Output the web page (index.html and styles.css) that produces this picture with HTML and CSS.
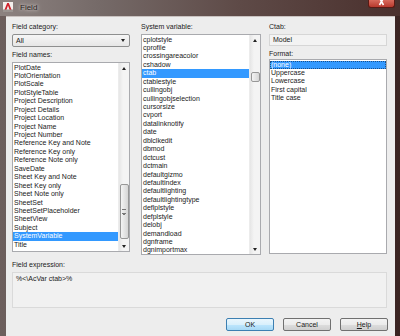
FILE: index.html
```html
<!DOCTYPE html>
<html lang="en">
<head>
  <meta charset="UTF-8">
  <title>Field</title>
  <link rel="stylesheet" href="styles.css">
</head>
<body>
  <div class="window">
    <div class="titlebar">
      <svg class="app-icon" width="10" height="10" viewBox="0 0 10 10">
        <rect x="0" y="0" width="10" height="10" fill="#f4f0ee"/>
        <polygon points="1,9 4.2,1 5.8,1 9,9 7,9 5,3.5 3,9" fill="#d0202a"/>
        <rect x="0" y="7.5" width="10" height="2.5" fill="#9a9390"/>
      </svg>
      <span class="title">Field</span>
      <div class="close">
        <svg width="25" height="7" viewBox="0 0 25 7">
          <path d="M10.5 -2 L14.5 5 M14.5 -2 L10.5 5" stroke="#fff" stroke-width="1.6"/>
        </svg>
      </div>
    </div>

    <div class="client">
      <div class="columns">
        <div class="col col-names">
          <div class="label">Field category:</div>
          <div class="combo">
            <span>All</span>
            <span class="arrow-down"></span>
          </div>
          <div class="label label-gap">Field names:</div>
          <div class="list names">
            <ul class="items">
              <li>PlotDate</li>
              <li>PlotOrientation</li>
              <li>PlotScale</li>
              <li>PlotStyleTable</li>
              <li>Project Description</li>
              <li>Project Details</li>
              <li>Project Location</li>
              <li>Project Name</li>
              <li>Project Number</li>
              <li>Reference Key and Note</li>
              <li>Reference Key only</li>
              <li>Reference Note only</li>
              <li>SaveDate</li>
              <li>Sheet Key and Note</li>
              <li>Sheet Key only</li>
              <li>Sheet Note only</li>
              <li>SheetSet</li>
              <li>SheetSetPlaceholder</li>
              <li>SheetView</li>
              <li>Subject</li>
              <li class="selected">SystemVariable</li>
              <li>Title</li>
            </ul>
            <div class="scrollbar">
              <div class="sb-btn"><span class="arrow-up"></span></div>
              <div class="track">
                <div class="thumb thumb-names"><span class="grip"></span></div>
              </div>
              <div class="sb-btn"><span class="arrow-down"></span></div>
            </div>
          </div>
        </div>

        <div class="col col-vars">
          <div class="label">System variable:</div>
          <div class="list vars">
            <ul class="items">
              <li>cplotstyle</li>
              <li>cprofile</li>
              <li>crossingareacolor</li>
              <li>cshadow</li>
              <li class="selected">ctab</li>
              <li>ctablestyle</li>
              <li>cullingobj</li>
              <li>cullingobjselection</li>
              <li>cursorsize</li>
              <li>cvport</li>
              <li>datalinknotify</li>
              <li>date</li>
              <li>dblclkedit</li>
              <li>dbmod</li>
              <li>dctcust</li>
              <li>dctmain</li>
              <li>defaultgizmo</li>
              <li>defaultindex</li>
              <li>defaultlighting</li>
              <li>defaultlightingtype</li>
              <li>deflplstyle</li>
              <li>defplstyle</li>
              <li>delobj</li>
              <li>demandload</li>
              <li>dgnframe</li>
              <li>dgnimportmax</li>
            </ul>
            <div class="scrollbar">
              <div class="sb-btn"><span class="arrow-up"></span></div>
              <div class="track">
                <div class="thumb thumb-vars"></div>
              </div>
              <div class="sb-btn"><span class="arrow-down"></span></div>
            </div>
          </div>
        </div>

        <div class="col col-format">
          <div class="label">Ctab:</div>
          <div class="readonly">Model</div>
          <div class="label label-gap2">Format:</div>
          <div class="list format">
            <ul class="items">
              <li class="selected focus">(none)</li>
              <li>Uppercase</li>
              <li>Lowercase</li>
              <li>First capital</li>
              <li>Title case</li>
            </ul>
          </div>
        </div>
      </div>

      <div class="label expr-label">Field expression:</div>
      <div class="expr">%&lt;\AcVar ctab&gt;%</div>

      <div class="buttons">
        <button class="btn btn-default">OK</button>
        <button class="btn">Cancel</button>
        <button class="btn"><u>H</u>elp</button>
      </div>
    </div>
  </div>
</body>
</html>
```

FILE: styles.css
```css
body {
  margin: 0;
  padding: 0;
  background: #3e2826;
  font-family: "Liberation Sans", Arial, sans-serif;
  font-size: 7px;
  color: #1a1a1a;
  overflow: hidden;
}
.window {
  width: 400px;
  height: 336px;
  display: flex;
  flex-direction: column;
  background: linear-gradient(90deg, #6d5f5d 0%, #5e4e4b 40%, #4a3230 80%, #3a2422 100%);
}
.titlebar {
  height: 16px;
  display: flex;
  align-items: flex-start;
  background: linear-gradient(90deg, #8c8280 0%, #756a68 25%, #5e4a47 60%, #4a302d 100%);
}
.app-icon {
  margin: 2px 0 0 3px;
}
.title {
  margin: 3px 0 0 7px;
  font-size: 8px;
  line-height: 9px;
  color: #2a2422;
  text-shadow: 0 0 3px #d8d2d0, 0 0 5px #cfc8c6;
}
.close {
  margin-left: auto;
  margin-right: 5px;
  width: 25px;
  height: 7px;
  border-radius: 0 0 3px 3px;
  background: linear-gradient(#d86a5c, #b8392d);
  border: 1px solid #5a1a14;
  border-top: none;
  overflow: hidden;
}
.close svg {
  display: block;
}
.client {
  flex: 1;
  margin: 0 5px 0 6px;
  padding: 5px 8px 0 6px;
  background: #ededed;
  border-top: 1px solid #c9c2c0;
}
.columns {
  display: flex;
  align-items: flex-start;
}
.col {
  display: flex;
  flex-direction: column;
}
.col-names {
  width: 118px;
}
.col-vars {
  width: 120px;
  margin-left: 11px;
}
.col-format {
  width: 118px;
  margin-left: 8px;
}
.label {
  height: 9px;
  line-height: 9px;
  white-space: nowrap;
}
.label-gap {
  margin-top: 3px;
}
.label-gap2 {
  margin-top: 3px;
}
.combo {
  margin-top: 3px;
  height: 11px;
  border: 1px solid #8e8f8f;
  border-radius: 2px;
  background: linear-gradient(#f6f6f6, #e6e6e6);
  display: flex;
  align-items: center;
  justify-content: space-between;
  padding: 0 4px 0 3px;
  line-height: 11px;
}
.readonly {
  margin-top: 3px;
  height: 10px;
  border: 1px solid #d6d6d6;
  background: #f3f3f3;
  padding-left: 3px;
  line-height: 10px;
}
.list {
  display: flex;
  background: #fff;
  border: 1px solid #a9aaae;
  overflow: hidden;
}
.names {
  margin-top: 3px;
  height: 188px;
}
.vars {
  margin-top: 3px;
  height: 219px;
}
.format {
  margin-top: 1px;
  height: 193px;
}
.items {
  flex: 1;
  list-style: none;
  margin: 0;
  padding: 0.5px 0 0;
  overflow: hidden;
}
.items li {
  height: 8.45px;
  line-height: 8.45px;
  padding-left: 1px;
  white-space: nowrap;
}
.items li.selected {
  background: #3399ff;
  color: #fff;
}
.items li.focus {
  outline: 1px dotted #1a4f8a;
  outline-offset: -1px;
}
.scrollbar {
  width: 10px;
  display: flex;
  flex-direction: column;
  background: linear-gradient(90deg, #e6e6e6, #f4f4f4 40%, #f4f4f4);
  border-left: 1px solid #ececec;
}
.sb-btn {
  height: 10px;
  display: flex;
  align-items: center;
  justify-content: center;
}
.track {
  flex: 1;
}
.thumb {
  margin-left: 0.5px;
  width: 7px;
  border: 1px solid #979797;
  border-radius: 2px;
  background: linear-gradient(90deg, #f4f4f4, #e3e3e3 55%, #d6d6d6);
  display: flex;
  align-items: center;
  justify-content: center;
}
.thumb-names {
  margin-top: 111px;
  height: 53px;
}
.thumb-vars {
  margin-top: 27px;
  height: 8px;
}
.grip {
  width: 4px;
  height: 3px;
  border-top: 1px solid #777;
  border-bottom: 1px solid #777;
  box-shadow: 0 2px 0 -1px #777;
}
.arrow-down {
  width: 0;
  height: 0;
  border-left: 2.5px solid transparent;
  border-right: 2.5px solid transparent;
  border-top: 3px solid #222;
}
.arrow-up {
  width: 0;
  height: 0;
  border-left: 2.5px solid transparent;
  border-right: 2.5px solid transparent;
  border-bottom: 3px solid #222;
}
.expr-label {
  margin-top: 4.5px;
}
.expr {
  margin-top: 3.5px;
  height: 34px;
  border: 1px solid #dadada;
  background: #f1f1f1;
  padding-left: 3px;
  line-height: 11px;
}
.buttons {
  margin-top: 10px;
  margin-right: -1px;
  display: flex;
  justify-content: flex-end;
  gap: 9px;
}
.btn {
  width: 48px;
  height: 13px;
  padding: 0;
  border: 1px solid #707070;
  border-radius: 2px;
  background: linear-gradient(#f3f3f3 0%, #ebebeb 50%, #dddddd 51%, #cfcfcf 100%);
  font-family: "Liberation Sans", Arial, sans-serif;
  font-size: 7px;
  line-height: 11px;
  color: #1a1a1a;
}
.btn-default {
  border-color: #3c7fb1;
  background: linear-gradient(#eaf6fd 0%, #d9f0fc 50%, #bee6fd 51%, #a7d9f5 100%);
}
```
